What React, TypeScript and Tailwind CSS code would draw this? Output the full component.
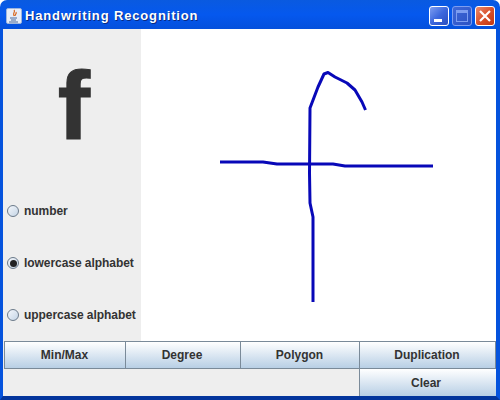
function WindowControls() {
  return (
    <div className="flex gap-[3px]">
      <div className="relative w-[20px] h-[20px] rounded-[3px] border border-white bg-gradient-to-br from-[#7f9df0] via-[#3c67dd] to-[#2a4ec0]">
        <div className="absolute left-[4px] bottom-[3px] w-[8px] h-[3px] bg-white" />
      </div>
      <div className="relative w-[20px] h-[20px] rounded-[3px] border border-[#7d9df0] bg-gradient-to-br from-[#3f68d8] to-[#2c52c4]">
        <div className="absolute left-[3px] top-[3px] w-[12px] h-[12px] border border-[#7d9df0] border-t-[3px]" />
      </div>
      <div className="relative w-[20px] h-[20px] rounded-[3px] border border-white bg-gradient-to-br from-[#e88a6c] via-[#d9512c] to-[#c2350f]">
        <svg width="18" height="18" viewBox="0 0 18 18" className="absolute left-0 top-0">
          <path d="M4 4 L14 14 M14 4 L4 14" stroke="#fff" strokeWidth="2.2" fill="none" />
        </svg>
      </div>
    </div>
  );
}

function JavaIcon() {
  return (
    <div className="w-[16px] h-[16px] rounded-[2px] bg-[#e8eef8] border border-[#9fb5dc] flex items-center justify-center">
      <svg width="14" height="14" viewBox="0 0 14 14">
        <path d="M7 1 C9 3 5 4 7 7 M9 3 C10 5 8 5 8 7" stroke="#d8661c" strokeWidth="1.2" fill="none" />
        <path d="M3 9 H10 M4 11 H9 M2 13 H11" stroke="#4a6a9c" strokeWidth="1" fill="none" />
      </svg>
    </div>
  );
}

function Radio({ label, checked }: { label: string; checked?: boolean }) {
  return (
    <div className="h-[52px] flex items-center pl-[4px]">
      <div className="w-[12px] h-[12px] rounded-full border border-[#6b7a8a] bg-gradient-to-br from-[#f4f7fb] to-[#c5d5e6] flex items-center justify-center">
        {checked && <div className="w-[7px] h-[7px] rounded-full bg-[#222]" />}
      </div>
      <span className="ml-[5px] text-[12px] font-bold tracking-[-0.05px] text-[#333]">{label}</span>
    </div>
  );
}

function Btn({ label, className }: { label: string; className: string }) {
  return (
    <div
      className={`flex items-center justify-center text-[12px] font-bold text-[#333] border-[#7a8a99] bg-gradient-to-b from-[#ffffff] to-[#b8cfe5] ${className}`}
    >
      {label}
    </div>
  );
}

export default function App() {
  return (
    <div
      className="w-[500px] h-[400px] flex flex-col bg-white overflow-hidden"
      style={{ fontFamily: '"Liberation Sans", Arial, sans-serif' }}
    >
      {/* Title bar */}
      <div className="h-[29px] shrink-0 rounded-t-[7px] flex items-center justify-between pl-[6px] pr-[5px] pt-[2px] bg-gradient-to-b from-[#0a5ae0] via-[#0558ee] to-[#0450dc]">
        <div className="flex items-center gap-[3px]">
          <JavaIcon />
          <span className="text-[13px] font-bold tracking-[0.85px] text-white [text-shadow:1px_1px_0_#0a2a80]">
            Handwriting Recognition
          </span>
        </div>
        <WindowControls />
      </div>

      {/* Window body */}
      <div className="flex-1 min-h-0 flex flex-col bg-[#eeeeee] border-l-[3px] border-r-[4px] border-b-[4px] border-l-[#0553dd] border-r-[#0553dd] border-b-[#03359c]">
        <div className="h-[312px] shrink-0 flex">
          <div className="w-[138px] shrink-0 flex flex-col bg-[#eeeeee]">
            <div className="h-[156px] pt-[18px] flex justify-center items-start">
              <span className="text-[97px] leading-[118px] font-bold text-[#333] ml-[4px] [-webkit-text-stroke:1px_#333]">f</span>
            </div>
            <Radio label="number" />
            <Radio label="lowercase alphabet" checked />
            <Radio label="uppercase alphabet" />
          </div>
          <div className="flex-1 bg-white">
            <svg width="355" height="312" viewBox="141 29 355 312" className="block">
              <g fill="none" stroke="#0808b8" strokeWidth="3" strokeLinejoin="round">
                <path d="M365.5 110 L362 102 L355 90 L347 83 L335 77 L328 72.5 L324 74 L318 87 L310 108 L309.5 173 L310 203 L313 217 L313 302" />
                <path d="M220 162 L263 162 L277 164 L333 164 L345 166 L433 166" />
              </g>
            </svg>
          </div>
        </div>

        <div className="flex-1 grid grid-cols-[122px_115px_119px_136px] grid-rows-[28px_27px] pl-[1px]">
          <Btn label="Min/Max" className="border pr-[1px]" />
          <Btn label="Degree" className="border-y border-r pr-[2px]" />
          <Btn label="Polygon" className="border-y border-r pr-[1px]" />
          <Btn label="Duplication" className="border-y border-r pr-[1px]" />
          <div className="col-span-3" />
          <Btn label="Clear" className="border-l -ml-[1px] pr-[4px]" />
        </div>
      </div>
    </div>
  );
}
